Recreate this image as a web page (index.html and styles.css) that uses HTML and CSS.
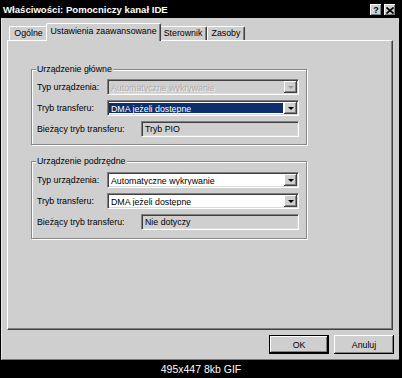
FILE: index.html
```html
<!DOCTYPE html>
<html lang="pl">

<head>
    <meta charset="UTF-8">
    <meta name="viewport" content="width=device-width, initial-scale=1.0">
    <title>Właściwości: Pomocniczy kanał IDE</title>
    <link rel="stylesheet" href="styles.css">
</head>

<body>
    <div class="window">
        <div class="titlebar">
            <span class="title">Właściwości: Pomocniczy kanał IDE</span>
            <div class="caption-buttons">
                <span class="cbtn help">?</span>
                <span class="cbtn">
                    <svg width="8" height="7" viewBox="0 0 8 7">
                        <path d="M0.5 0.5 L7.5 6.5 M7.5 0.5 L0.5 6.5" stroke="#000" stroke-width="1.6" fill="none"/>
                    </svg>
                </span>
            </div>
        </div>

        <div class="tabs">
            <div class="tab tab-general">Ogólne</div>
            <div class="tab tab-active">Ustawienia zaawansowane</div>
            <div class="tab tab-driver">Sterownik</div>
            <div class="tab tab-resources">Zasoby</div>
        </div>

        <div class="panel">
            <!-- Urządzenie główne -->
            <div class="group">
                <span class="legend">Urządzenie główne</span>
                <div class="row">
                    <label class="label">Typ urządzenia:</label>
                    <div class="combo disabled">
                        <span class="combo-text">Automatyczne wykrywanie</span>
                        <span class="combo-btn"><span class="arrow"></span></span>
                    </div>
                </div>
                <div class="row">
                    <label class="label">Tryb transferu:</label>
                    <div class="combo focused">
                        <span class="combo-text">DMA jeżeli dostępne</span>
                        <span class="combo-btn"><span class="arrow"></span></span>
                    </div>
                </div>
                <div class="row">
                    <label class="label label-wide">Bieżący tryb transferu:</label>
                    <div class="field">Tryb PIO</div>
                </div>
            </div>

            <!-- Urządzenie podrzędne -->
            <div class="group group-second">
                <span class="legend">Urządzenie podrzędne</span>
                <div class="row">
                    <label class="label">Typ urządzenia:</label>
                    <div class="combo">
                        <span class="combo-text">Automatyczne wykrywanie</span>
                        <span class="combo-btn"><span class="arrow"></span></span>
                    </div>
                </div>
                <div class="row">
                    <label class="label">Tryb transferu:</label>
                    <div class="combo">
                        <span class="combo-text">DMA jeżeli dostępne</span>
                        <span class="combo-btn"><span class="arrow"></span></span>
                    </div>
                </div>
                <div class="row">
                    <label class="label label-wide">Bieżący tryb transferu:</label>
                    <div class="field">Nie dotyczy</div>
                </div>
            </div>
        </div>

        <div class="buttons">
            <button class="btn btn-default">OK</button>
            <button class="btn">Anuluj</button>
        </div>
    </div>

    <div class="caption">495x447 8kb GIF</div>
</body>

</html>
```

FILE: styles.css
```css
body {
    margin: 0;
    width: 402px;
    height: 378px;
    overflow: hidden;
    background-color: #000;
    font-family: "Liberation Sans", Arial, sans-serif;
    font-size: 8.8px;
    color: #000;
}

.window {
    box-sizing: border-box;
    width: 398px;
    height: 360px;
    margin-left: 1px;
    background-color: #cfcfcf;
    border-left: 1px solid #e6e6e6;
    border-bottom: 1px solid #7a7a7a;
    display: flex;
    flex-direction: column;
}

/* title bar */
.titlebar {
    height: 18px;
    flex-shrink: 0;
    background-color: #000;
    display: flex;
    align-items: center;
    padding: 0 3px 0 2px;
    margin-left: -1px;
}

.title {
    color: #fff;
    font-weight: bold;
    font-size: 9.6px;
    padding-top: 1px;
}

.caption-buttons {
    margin-left: auto;
    display: flex;
    gap: 2px;
    padding-top: 2px;
}

.cbtn {
    box-sizing: border-box;
    width: 12px;
    height: 12px;
    background-color: #cfcfcf;
    box-shadow: inset -1px -1px #000, inset 1px 1px #fff, inset -2px -2px #808080;
    display: flex;
    align-items: center;
    justify-content: center;
    font-weight: bold;
    font-size: 9px;
    line-height: 12px;
}

/* tabs */
.tabs {
    display: flex;
    align-items: flex-end;
    height: 17px;
    margin-top: 5px;
    padding-left: 7px;
    flex-shrink: 0;
}

.tab {
    box-sizing: border-box;
    height: 14px;
    line-height: 12px;
    text-align: center;
    background-color: #cfcfcf;
    border-top: 1px solid #fff;
    border-left: 1px solid #fff;
    border-right: 1px solid #404040;
    border-radius: 2px 2px 0 0;
    box-shadow: inset -1px 0 #808080;
    white-space: nowrap;
}

.tab-general {
    width: 39px;
}

.tab-active {
    position: relative;
    z-index: 1;
    width: 115px;
    height: 18px;
    line-height: 15px;
    margin: 0 -2px -1px;
}

.tab-driver {
    width: 48px;
}

.tab-resources {
    width: 38px;
}

/* panel */
.panel {
    box-sizing: border-box;
    width: 386px;
    height: 290px;
    margin-left: 5px;
    flex-shrink: 0;
    border-top: 1px solid #fff;
    border-left: 1px solid #fff;
    border-right: 1px solid #404040;
    border-bottom: 1px solid #404040;
    box-shadow: inset -1px -1px #808080;
    padding: 28px 0 0 23px;
}

.group {
    position: relative;
    box-sizing: border-box;
    width: 276px;
    height: 76px;
    border: 1px solid #888;
    box-shadow: 1px 1px 0 #fff, inset 1px 1px 0 #fff;
    padding: 9px 0 0 5px;
    display: flex;
    flex-direction: column;
    gap: 5px;
}

.group-second {
    height: 78px;
    margin-top: 16px;
    padding-top: 10px;
}

.legend {
    position: absolute;
    top: -6px;
    left: 4px;
    padding: 0 1px;
    background-color: #cfcfcf;
    line-height: 11px;
}

.row {
    display: flex;
    align-items: center;
    height: 16px;
}

.label {
    width: 70px;
    flex-shrink: 0;
    white-space: nowrap;
}

.label-wide {
    width: 104px;
}

/* combo boxes and fields */
.combo,
.field {
    box-sizing: border-box;
    height: 16px;
    border: 1px solid;
    border-color: #808080 #fff #fff #808080;
    box-shadow: inset 1px 1px #404040, inset -1px -1px #dadada;
}

.combo {
    width: 192px;
    background-color: #fff;
    display: flex;
    padding: 1px;
}

.combo-text {
    flex: 1;
    line-height: 12px;
    padding-left: 2px;
    margin: 1px 1px 1px 0;
    white-space: nowrap;
    overflow: hidden;
}

.combo.focused .combo-text {
    background-color: #0c2e6c;
    color: #fff;
}

.combo.disabled {
    background-color: #cfcfcf;
}

.combo.disabled .combo-text {
    color: #ababab;
    text-shadow: 1px 1px 0 #f2f2f2;
}

.combo-btn {
    box-sizing: border-box;
    width: 13px;
    height: 12px;
    background-color: #cfcfcf;
    box-shadow: inset -1px -1px #404040, inset 1px 1px #fff, inset -2px -2px #808080;
    display: flex;
    align-items: center;
    justify-content: center;
}

.arrow {
    width: 0;
    height: 0;
    border-left: 3px solid transparent;
    border-right: 3px solid transparent;
    border-top: 3px solid #000;
    margin-top: 1px;
}

.combo.disabled .arrow {
    border-top-color: #9a9a9a;
}

.field {
    width: 158px;
    background-color: #cfcfcf;
    line-height: 14px;
    padding-left: 3px;
    white-space: nowrap;
}

/* bottom buttons */
.buttons {
    display: flex;
    justify-content: flex-end;
    gap: 5px;
    margin-top: 5px;
    padding-right: 5px;
}

.btn {
    box-sizing: border-box;
    width: 60px;
    height: 19px;
    padding: 0;
    font-family: inherit;
    font-size: 8.8px;
    color: #000;
    background-color: #cfcfcf;
    border: none;
    box-shadow: inset -1px -1px #000, inset 1px 1px #fff, inset -2px -2px #808080;
}

.btn-default {
    border: 1px solid #000;
    box-shadow: inset -1px -1px #000, inset 1px 1px #fff, inset -2px -2px #808080;
}

.caption {
    height: 18px;
    line-height: 18px;
    text-align: center;
    color: #fff;
    font-size: 10.5px;
}
```
